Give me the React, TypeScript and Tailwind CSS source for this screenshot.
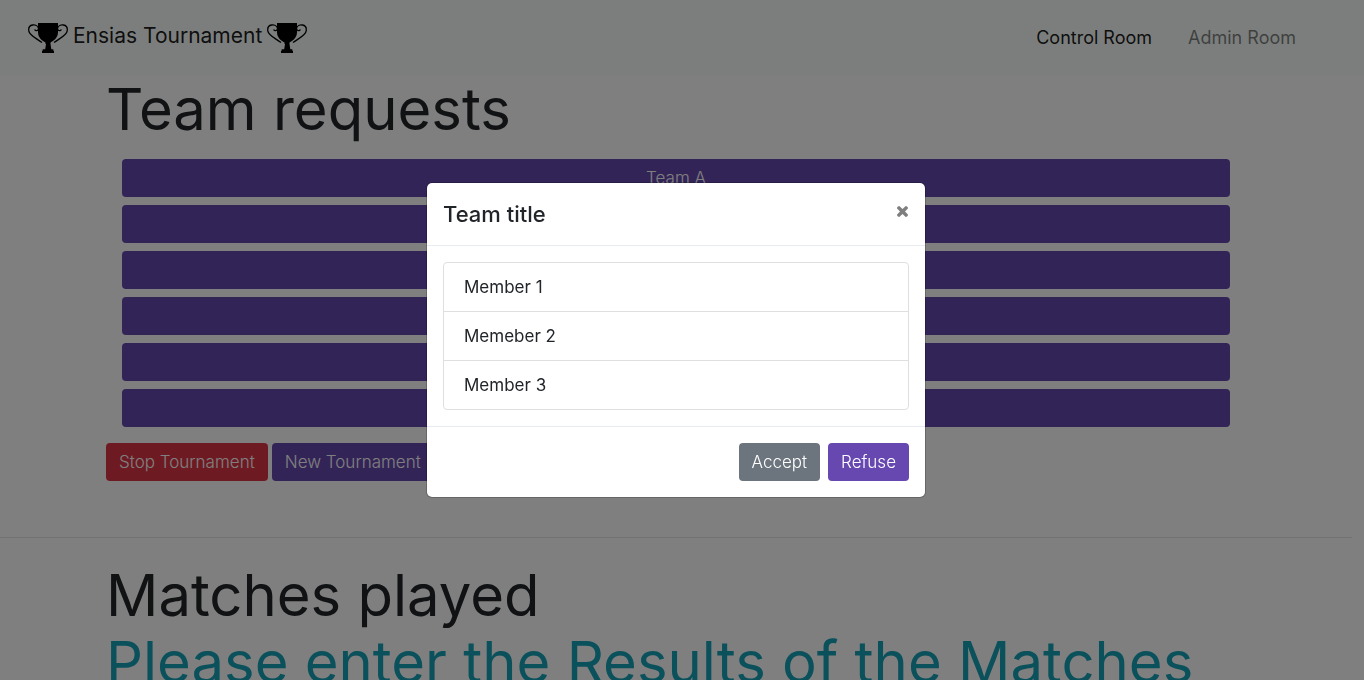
import type { ButtonHTMLAttributes } from "react";

const teams = ["Team A", "Team B", "Team C", "Team D", "Team E", "Team F"];
const members = ["Member 1", "Memeber 2", "Member 3"];

const tones = {
  primary: "bg-[#6748b0]",
  danger: "bg-[#dc3545]",
  secondary: "bg-[#6c757d]",
};

type ButtonProps = ButtonHTMLAttributes<HTMLButtonElement> & {
  tone?: keyof typeof tones;
};

function Button({ tone = "primary", className = "", ...rest }: ButtonProps) {
  return (
    <button
      type="button"
      className={`h-[38px] rounded px-[13px] text-[17px] leading-6 font-light whitespace-nowrap text-white ${tones[tone]} ${className}`}
      {...rest}
    />
  );
}

function Trophy() {
  return (
    <svg viewBox="0 0 40 30" className="h-[30px] w-10 shrink-0" aria-hidden="true">
      <path d="M10 0h20v9c0 5-3 8-7.500 10.500v1.500h-5v-1.500C13 17 10 14 10 9z" />
      <path d="M18 21h4.500l.8 5.200h2v1.600H26V30H14v-2.200h.7v-1.600h2.500z" />
      <path
        d="M10.500 5.500C10 2.500 7 1.600 4.500 2 1.500 2.500.4 5 .8 7.800 1.500 12.500 8 15 14 19.500M10.500 5.500C10.500 8 7.200 8.500 6.800 6.300M29.500 5.500c.5-3 3.500-3.900 6-3.500 3 .5 4.100 3 3.700 5.800C38.500 12.500 32 15 26 19.500M29.500 5.500c0 2.500 3.300 3 3.700.8"
        fill="none"
        stroke="black"
        strokeWidth="1.300"
      />
    </svg>
  );
}

function Navbar() {
  return (
    <nav className="flex h-[76px] items-center justify-between bg-[#f7fcf9] pr-[68px] pl-7">
      <a href="#" className="flex items-start gap-[5px] text-[21px] leading-[26px] text-black/90">
        <Trophy />
        Ensias Tournament
        <Trophy />
      </a>
      <ul className="flex gap-9 text-lg leading-[26px]">
        <li>
          <a href="#control" className="text-black/90">
            Control Room
          </a>
        </li>
        <li>
          <a href="#admin" className="text-black/50">
            Admin Room
          </a>
        </li>
      </ul>
    </nav>
  );
}

function TeamModal() {
  return (
    <div className="fixed inset-0 flex items-center justify-center bg-black/50 pr-3">
      <div
        role="dialog"
        aria-modal="true"
        aria-labelledby="team-title"
        className="w-full max-w-[500px] rounded-md border border-black/20 bg-white bg-clip-padding"
      >
        <header className="flex items-start justify-between border-b border-[#e9ecef] p-4">
          <h5 id="team-title" className="text-[22px] leading-[30px] font-medium">
            Team title
          </h5>
          <button type="button" aria-label="Close" className="pt-[6px] text-[#7f7f7f]">
            <svg viewBox="0 0 13 13" className="size-[13px]" aria-hidden="true">
              <path
                d="M3.300.9 6.500 4 9.700.9l1.400.5.900 1.300-.1.800L9 6.500l2.900 3 .1.800-.9 1.300-1.400.5L6.500 9l-3.200 3.100-1.400-.5L1 10.300l.1-.8L4 6.500l-2.900-3L1 2.700l.9-1.300z"
                fill="currentColor"
              />
            </svg>
          </button>
        </header>
        <div className="p-4">
          <ul className="divide-y divide-[#dfdfdf] rounded border border-[#dfdfdf]">
            {members.map((member) => (
              <li key={member} className="px-5 py-3 text-[17px] leading-6">
                {member}
              </li>
            ))}
          </ul>
        </div>
        <footer className="flex justify-end gap-2 border-t border-[#e9ecef] p-4">
          <Button tone="secondary">Accept</Button>
          <Button>Refuse</Button>
        </footer>
      </div>
    </div>
  );
}

export default function App() {
  return (
    <div className="h-screen overflow-hidden bg-white font-['Inter',sans-serif] text-[#212529]">
      <Navbar />
      <div className="pr-3">
        <main className="mx-auto max-w-[1140px]">
          <h1 className="text-[58px] leading-[67px]">Team requests</h1>
          <div className="flex flex-col gap-2 p-4">
            {teams.map((team) => (
              <Button key={team}>{team}</Button>
            ))}
          </div>
          <div className="flex gap-1">
            <Button tone="danger">Stop Tournament</Button>
            <Button>New Tournament</Button>
          </div>
        </main>
        <hr className="mt-14 mb-6 border-black/10" />
        <section className="mx-auto max-w-[1140px] text-[58px] leading-[67px]">
          <h2>Matches played</h2>
          <p className="whitespace-nowrap text-[#17a2b8]">Please enter the Results of the Matches</p>
        </section>
      </div>
      <TeamModal />
    </div>
  );
}
